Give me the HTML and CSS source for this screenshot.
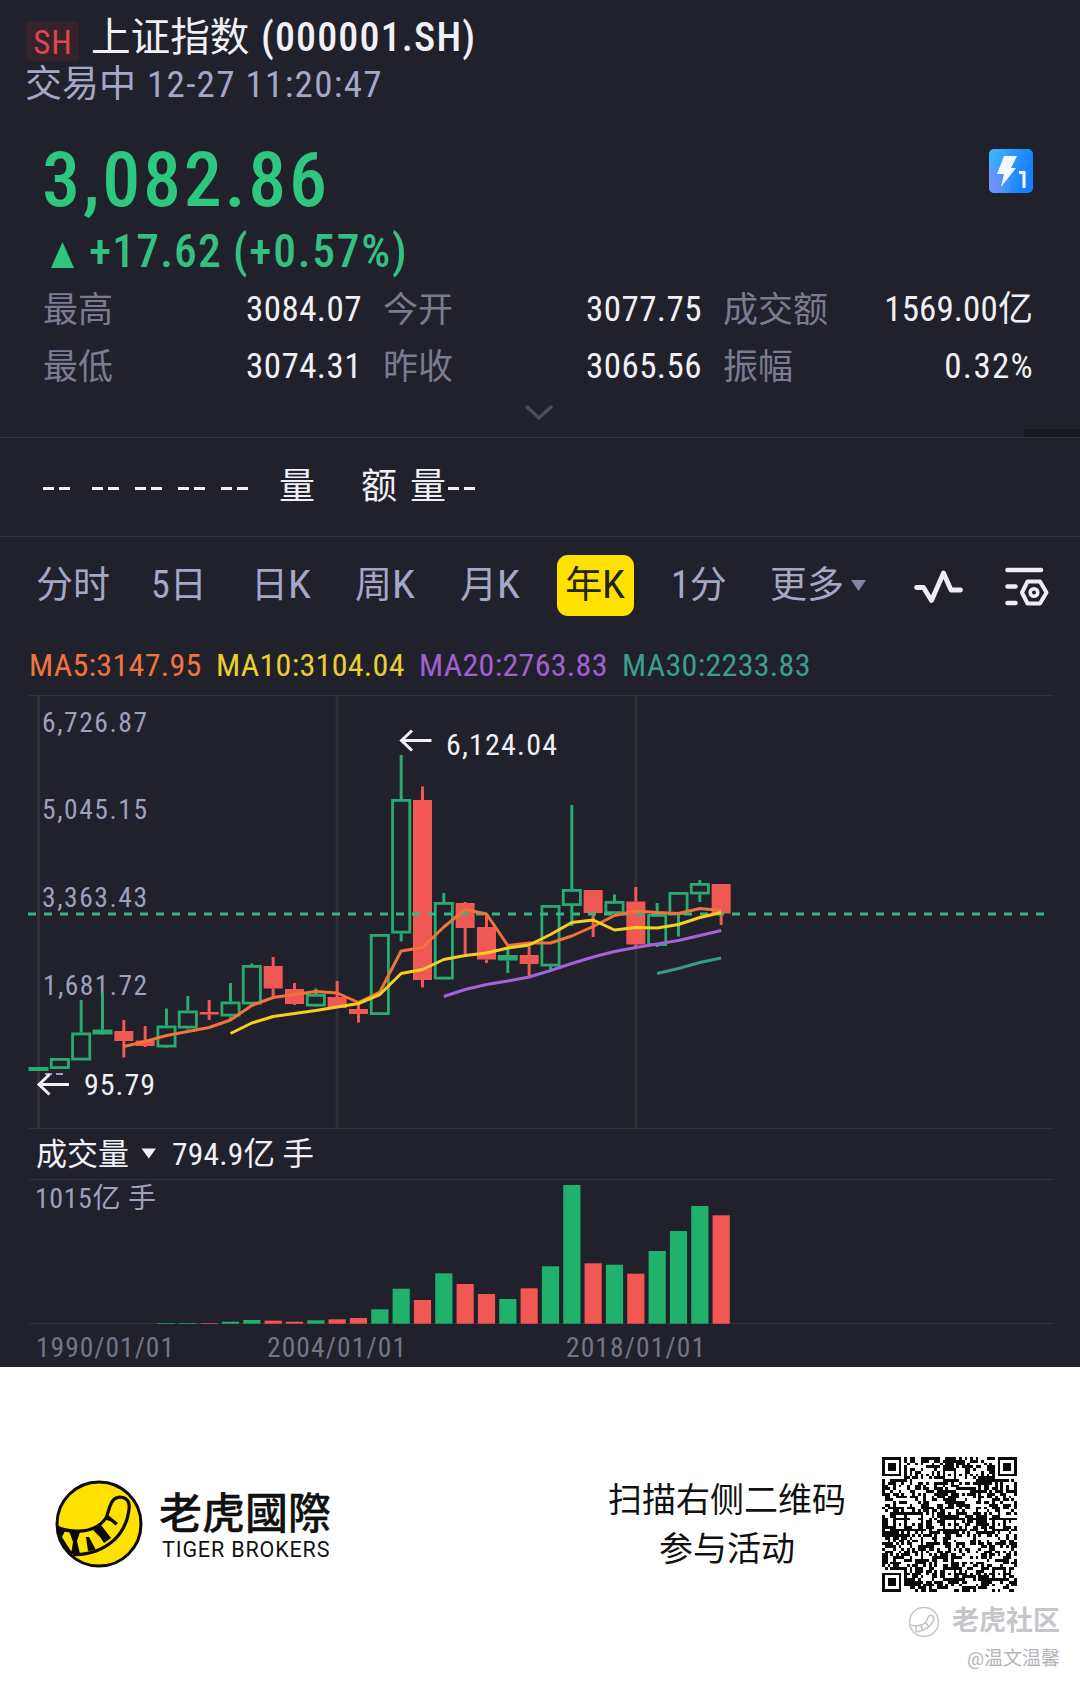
FILE: index.html
```html
<!DOCTYPE html>
<html lang="zh-CN">
<head>
<meta charset="utf-8">
<title>上证指数 (000001.SH)</title>
<link rel="stylesheet" href="styles.css">
</head>
<body>
<main class="panel">
  <header class="head">
    <div class="title-row"><span class="badge">SH</span><h1>上证指数</h1><span class="code">(000001.SH)</span></div>
    <div class="status-row"><span>交易中</span><span class="time">12-27 11:20:47</span></div>
  </header>
  <section class="quote">
    <div class="price-row">
      <div class="price">3,082.86</div>
      <svg class="flash" viewBox="0 0 44 44">
        <defs>
          <linearGradient id="fg" x1="0" y1="0" x2="1" y2="0.35"><stop offset="0" stop-color="#46b4fb"/><stop offset="1" stop-color="#167fff"/></linearGradient>
          <radialGradient id="fp" cx="0" cy="0.85" r="0.6"><stop offset="0" stop-color="#7d8cff"/><stop offset="1" stop-color="#7d8cff" stop-opacity="0"/></radialGradient>
        </defs>
        <rect width="44" height="44" rx="5" fill="url(#fg)"/><rect width="44" height="44" rx="5" fill="url(#fp)"/>
        <path d="M15 7H28L22 19H27L12 38L15 25H8Z" fill="#f2faff"/>
        <path d="M30 23.5H35V39" fill="none" stroke="#fff" stroke-width="3"/>
      </svg>
    </div>
    <div class="change-row"><i class="up"></i><span class="delta">+17.62</span><span class="pct">(+0.57%)</span></div>
    <dl class="stats">
      <dt>最高</dt><dd>3084.07</dd><dt>今开</dt><dd>3077.75</dd><dt>成交额</dt><dd>1569.00<span class="cn">亿</span></dd>
      <dt>最低</dt><dd>3074.31</dd><dt>昨收</dt><dd>3065.56</dd><dt>振幅</dt><dd class="amp">0.32%</dd>
    </dl>
    <svg class="chevron" viewBox="0 0 28 16"><path d="M2 2L14 13L26 2" fill="none" stroke="#4c4d5b" stroke-width="3.4" stroke-linecap="round"/></svg>
    <i class="stub"></i>
  </section>
  <section class="ticks">
    <span class="dash"></span><span class="dash"></span><span class="dash"></span><span class="dash"></span><span class="dash"></span>
    <span class="vol">量</span><span class="amt">额</span><span class="vol2">量</span><span class="dash"></span>
  </section>
  <nav class="tabs">
    <span class="tab t1">分时</span><span class="tab t2"><b>5</b>日</span><span class="tab t3">日<b>K</b></span><span class="tab t4">周<b>K</b></span><span class="tab t5">月<b>K</b></span><span class="tab active">年<b>K</b></span><span class="tab t7"><b>1</b>分</span><span class="tab t8">更多<i class="down"></i></span>
    <svg class="wave" viewBox="0 0 50 34"><path d="M2.5 17.5H9.500L17.5 30.500L29.500 3L37 20H46.500" fill="none" stroke="#eeeef2" stroke-width="4.800" stroke-linecap="round" stroke-linejoin="round"/></svg>
    <svg class="gear" viewBox="0 0 44 40" fill="none" stroke="#eeeef2" stroke-width="4.600" stroke-linecap="round" stroke-linejoin="round"><path d="M2.5 3H36M2.5 19.5H10.500M2.500 36H10.500"/><path d="M22.500 14.500H35L41.500 25.500L35 36.500H22.500L17 25.500Z" stroke-width="4"/><circle cx="29" cy="25.500" r="3.800" stroke-width="3.600"/></svg>
  </nav>
  <div class="ma"><span class="m5">MA5:3147.95</span><span class="m10">MA10:3104.04</span><span class="m20">MA20:2763.83</span><span class="m30">MA30:2233.83</span></div>
  <svg class="chart" id="chart" viewBox="0 690 1080 677"></svg>
</main>
<footer class="foot">
  <svg class="logo" viewBox="0 0 88 88">
    <circle cx="44" cy="44" r="42" fill="#ffe100" stroke="#0b0b0b" stroke-width="3"/>
    <path d="M2 47Q10 51 20 51C36 52 47 45 51.500 37L55 26C58 17 64 16.500 68 17.500C76 20 75 28 72 39C68 52 59 64 41 71Q30 75 18 74.500" fill="none" stroke="#0b0b0b" stroke-width="3.200" stroke-linejoin="round"/>
    <path d="M2 46L10 51L7 57L12 65L18 74L11 71L3 57ZM14 51L25 52L22 61L25 74H16L18 62ZM31 57L34 57L41 70L33 71ZM38 50L46 45L56 58L49 63L45 57ZM49 39L53 35L63 43L60.500 45.500L56 41.500Z" fill="#0b0b0b"/>
  </svg>
  <div class="brand"><div class="brand-cn">老虎國際</div><div class="brand-en">TIGER BROKERS</div></div>
  <p class="scan">扫描右侧二维码<br>参与活动</p>
  <svg class="qr" id="qr" viewBox="0 0 49 49" shape-rendering="crispEdges"></svg>
  <div class="mark">
    <svg viewBox="0 0 32 32" fill="none" stroke="#c4c6c9" stroke-width="1.600"><circle cx="16" cy="16" r="14.500"/><path d="M2 19C10 21 17 19 19 14C20 10 22 8 25 10C28 15 21 24 8 26M8 20V26M13 20L15 25M18 17L21 21"/></svg>
    <span>老虎社区</span>
  </div>
  <div class="user">@温文温馨</div>
</footer>
<script src="chart.js"></script>
</body>
</html>
```
FILE: styles.css
```css
* { box-sizing: border-box; }
body { margin: 0; width: 1080px; background: #fff; font-family: Roboto, "Noto Sans CJK SC", sans-serif; font-stretch: 87%; }
.panel { height: 1367px; background: #21212b; color: #f0f0f5; display: flex; flex-direction: column; overflow: hidden; }
.head { height: 130px; padding: 13px 26px 0; white-space: nowrap; }
.title-row { display: flex; height: 50px; line-height: 50px; }
.badge { width: 53px; height: 40px; margin-top: 8px; padding-left: 1px; line-height: 43px; border-radius: 5px; background: #35232b; color: #dc4850; font-size: 33px; letter-spacing: 1px; text-align: center; }
h1 { margin: 0 0 0 12px; font-size: 39.6px; font-weight: 400; width: 170px; }
.code { font-size: 40px; font-weight: 500; letter-spacing: 1.15px; }
.status-row { display: flex; height: 44px; line-height: 44px; color: #a6a7c6; font-size: 37px; }
.status-row span:first-child { margin: 0 0 0 -1px; width: 122px; }
.time { letter-spacing: 1.3px; }
.quote { height: 308px; position: relative; padding: 0 47px 0 43px; border-bottom: 1px solid #32333e; display: flex; flex-direction: column; }
.price-row { display: flex; justify-content: space-between; height: 95px; }
.price { font-size: 76px; font-weight: 500; line-height: 100px; color: #2dc782; letter-spacing: 2.7px; margin-left: -1px; }
.flash { width: 44px; height: 44px; margin-top: 19px; }
.change-row { display: flex; height: 52px; line-height: 54px; color: #35c083; font-size: 45.5px; font-weight: 500; }
.up { width: 23px; height: 26px; margin: 17px 15px 0 8px; background: #2dc782; clip-path: polygon(50% 0, 100% 100%, 0 100%); }
.delta { width: 144px; letter-spacing: 1.2px; }
.pct { letter-spacing: 1.8px; }
.stats { margin: 3px -12px 0 0; display: grid; grid-template-columns: 100px 219px 121px 219px 138px 194px; grid-template-rows: 57px 57px; line-height: 59px; font-size: 35px; white-space: nowrap; }
dt { color: #7b7c90; margin-top: 1px; }
dd { margin: 0; text-align: right; letter-spacing: .45px; }
dd:nth-of-type(3n) { letter-spacing: .1px; padding-right: 1px; }
dd.amp { letter-spacing: 1.300px; padding: 0; }
dt:nth-of-type(3n+2), dt:nth-of-type(3n) { padding-left: 21px; }
.chevron { width: 28px; height: 16px; position: absolute; left: 525px; top: 275px; }
.stub { position: absolute; right: 0; top: 299px; width: 56px; height: 8px; background: #171720; }
.ticks { height: 99px; border-bottom: 1px solid #30313c; display: flex; align-items: center; padding-left: 43px; font-size: 36px; line-height: 97px; }
.dash { width: 27px; height: 3px; margin: 3px 16px 0 0; background: linear-gradient(90deg, #f0f0f5 0 11px, transparent 11px 16px, #f0f0f5 16px); }
.dash:first-child { margin-right: 22px; }
.vol { margin-left: 15px; width: 82px; }
.amt { width: 49px; }
.vol2 { width: 38px; }
.tabs { height: 113px; display: flex; padding: 18px 0 0 36px; font-size: 37px; line-height: 61px; color: #a6a7c6; white-space: nowrap; }
.tab { height: 61px; flex: none; }
.tab b { display: inline-block; font-weight: 400; font-size: 38px; line-height: 50px; transform-origin: 0 50%; }
.t3 b, .t4 b, .t5 b, .active b { transform: scaleX(1.1); }
.t1 { width: 115px; } .t2 { width: 100px; } .t3 { width: 104px; } .t4 { width: 105px; } .t5 { width: 97px; }
.active { width: 77px; background: #ffe100; color: #24230f; border-radius: 11px; text-align: center; padding-right: 3px; margin-right: 37px; }
.t7 { width: 99px; } .t8 { display: flex; width: 144px; }
.down { width: 15px; height: 11px; margin: 25px 0 0 7px; background: #8485a0; clip-path: polygon(0 0, 100% 0, 50% 100%); }
.wave { width: 50px; height: 34px; margin-top: 15px; flex: none; }
.gear { width: 44px; height: 40px; margin: 12px 0 0 41px; flex: none; }
.ma { height: 40px; line-height: 30px; padding-left: 29px; display: flex; font-size: 32px; letter-spacing: .3px; white-space: nowrap; }
.m5 { width: 187px; color: #ee7440; } .m10 { width: 203px; color: #ead02e; } .m20 { width: 203px; color: #9f61d0; } .m30 { color: #3c9e8c; }
.chart { width: 1080px; height: 677px; flex: none; display: block; }
.chart text { font-family: Roboto, "Noto Sans CJK SC", sans-serif; }
.foot { height: 316px; background: #fff; color: #111; display: grid; grid-template-columns: 104px 401px 300px 135px; grid-template-rows: 239px 44px 33px; padding-left: 55px; }
.logo { width: 88px; height: 88px; margin-top: 113px; }
.brand-cn { font: 500 43px/50px "Noto Sans CJK TC", sans-serif; -webkit-text-stroke: .3px #111; margin-top: 118px; }
.brand-en { font-size: 21.500px; line-height: 26px; margin: 2px 0 0 3px; font-stretch: 100%; letter-spacing: .85px; }
.scan { margin: 109px 0 0; width: 334px; text-align: center; font-size: 34px; line-height: 49px; }
.qr { width: 135px; height: 135px; margin: 90px 0 0 22px; }
.mark { grid-column: 1 / -1; display: flex; justify-content: flex-end; margin-right: -65px; height: 32px; line-height: 30px; gap: 12px; color: #c4c6c9; font-size: 27px; font-weight: 700; }
.mark svg { width: 32px; height: 32px; }
.user { grid-column: 1 / -1; text-align: right; margin-right: -65px; color: #b4b6ba; font-size: 19px; line-height: 18px; font-stretch: 100%; }
```
FILE: chart.js
```js
const UP = '#29ab70', DOWN = '#f15854', X0 = 38.5, STEP = 21.333;
const cx = i => X0 + i * STEP;
const out = [];
const rect = (x, y, w, h, fill) => out.push(`<rect x="${x}" y="${y}" width="${w}" height="${h}" fill="${fill}"/>`);
const text = (x, y, w, size, fill, s) => out.push(`<text x="${x}" y="${y}" font-size="${size}" fill="${fill}" textLength="${w}" lengthAdjust="spacing">${s}</text>`);

// frame and year grid
[695, 1128, 1179, 1323].forEach(y => rect(28, y, 1025, 1, '#30313c'));
[0, 14, 28].forEach(i => rect(cx(i) - 1.5, 696, 3, 432, '#2f2f36'));

text(42, 732, 105, 27.5, '#a0a0bd', '6,726.87');
text(42, 819, 105, 27.5, '#a0a0bd', '5,045.15');
text(42, 907, 105, 27.5, '#a0a0bd', '3,363.43');
text(43, 995, 104, 27.5, '#a0a0bd', '1,681.72');
rect(45, 1073, 7, 2, '#a0a0bd');
rect(56, 1073, 7, 2, '#a0a0bd');

// kind (h hollow, f filled up, r down), body top, body bottom, high, low
const candles = [
  ['f',1067,1071,1067,1071],['h',1058,1069,1058,1069],['h',1032.5,1060.5,1000,1060],['f',1029.5,1034.5,992.5,1035],
  ['r',1031,1041,1020,1057.5],['r',1040.5,1046,1026,1047],['h',1025.5,1047.5,1008.5,1048],['h',1010.5,1028.5,996,1029.5],
  ['r',1012,1014.5,1000,1020],['h',1001.5,1016.5,983,1019],['h',965,1004.5,963.5,1005],['r',966,988.5,957,996],
  ['r',989,1004,983,1005],['h',994,1006.5,988.5,1007],['r',997,1008,981,1008],['r',1009,1014,1002,1022.5],
  ['h',934,1015,934,1015],['h',799,933.5,755,941.5],['r',800,980,786.5,987.5],['h',902,979.5,893,979],
  ['r',903,928,902,954],['r',927,959.5,914,963],['f',955,960.5,948.5,973],['r',955,964,946.5,976],
  ['h',905,966.5,905,969],['h',889,906,805,926],['r',890,913,890,937],['h',901,914,894.5,914],
  ['r',901.5,944.5,887,948],['h',914,946,903,947],['h',892,915,892,936.5],['h',883,894.5,880,902],['r',884,913.5,884,925]
];
candles.forEach(([k, t, b, hi, lo], i) => {
  const c = k === 'r' ? DOWN : UP, x = cx(i);
  if (hi < t) rect(x - 1.5, hi, 3, t - hi, c);
  if (lo > b) rect(x - 1.5, b, 3, lo - b, c);
  if (k === 'h') out.push(`<rect x="${x - 8.6}" y="${t + 1.4}" width="17.2" height="${b - t - 2.8}" fill="none" stroke="${c}" stroke-width="2.8"/>`);
  else rect(x - (k === 'f' ? 10 : 9.5), t, k === 'f' ? 20 : 19, b - t, c);
});
out.push(`<path d="M28 914H1045" stroke="#35b880" stroke-width="2.800" stroke-dasharray="8 8"/>`);

const line = (start, ys, c) => out.push(`<polyline points="${ys.map((y, i) => cx(start + i) + ',' + y).join(' ')}" fill="none" stroke="${c}" stroke-width="3" stroke-linejoin="round"/>`);
line(4, [1046.5,1041.5,1035.5,1031.5,1027.5,1020,1005.5,997.5,994.5,991.5,993,1002.5,992,951,947.5,927,909.5,914,945.5,943,943,936,926.5,915.5,911,912.5,913.5,908.5,910.5], '#f0733a');
line(9, [1033.5,1023,1016.5,1013.5,1010.5,1007,1003.5,994.5,973.5,969.5,959.5,955.5,953,948,945,934.5,922.5,920,930,927.5,928,924.5,917.5,912.5], '#f6cf20');
line(19, [996.5,989.5,984.5,981,977,970.5,963.5,957,951.5,947.5,944,940.5,935.5,930.5], '#a364d8');
line(29, [973.5,968.5,962.5,958], '#379b8b');

const arrow = (x, y) => out.push(`<path d="M${x + 30} ${y}H${x}M${x + 10.5} ${y - 10}L${x} ${y}L${x + 10.5} ${y + 10}" fill="none" stroke="#f0f0f5" stroke-width="3"/>`);
arrow(401.5, 740.5);
arrow(39, 1084.5);
text(446, 754.5, 111, 30, '#f0f0f5', '6,124.04');
text(84, 1095, 71, 30, '#f0f0f5', '95.79');

// volume
text(36, 1164.500, 93, 31, '#f0f0f5', '成交量');
out.push('<path d="M141.500 1148.500H156L148.800 1158.500Z" fill="#f0f0f5"/>');
text(172, 1164.500, 142, 31.5, '#f0f0f5', '794.9亿 手');
text(35, 1207.500, 121, 28, '#a0a0bd', '1015亿 手');
const vol = 'g1323 g1323 r1323 g1321.7 g1320 r1320.700 r1321.700 g1320.300 r1319.300 r1318 g1309.300 g1288.700 r1300 g1273.300 r1284 r1294 g1299 r1288.300 g1266.300 g1185 r1263.300 g1264.700 r1273.700 g1251 g1231 g1206 r1215.300'.split(' ');
vol.forEach((v, i) => {
  const y = +v.slice(1);
  rect(cx(i + 6) - 8.6, y, 17.2, 1323.7 - y, v[0] === 'g' ? '#20b16d' : DOWN);
});
text(36, 1357, 138, 27.5, '#747586', '1990/01/01');
text(267, 1357, 139, 27.5, '#747586', '2004/01/01');
text(566, 1357, 139, 27.5, '#747586', '2018/01/01');
document.getElementById('chart').innerHTML = out.join('');

// 49-module code: finders, alignment marks, timing tracks and data modules
const N = 49, finder = (x, y) => {
  const d = Math.max(Math.abs(x - 3), Math.abs(y - 3));
  return d === 4 ? 0 : d === 3 || d < 2 ? 1 : 0;
};
let seed = 20221227, d = '';
const rnd = () => (seed = (seed * 1103515245 + 12345) % 2147483648) / 2147483648;
for (let y = 0; y < N; y++) for (let x = 0; x < N; x++) {
  let v = rnd() < 0.52 ? 1 : 0;
  if (x === 6 || y === 6) v = (x + y) % 2 ? 0 : 1;
  for (const a of [6, 24, 42]) for (const b of [6, 24, 42]) {
    const m = Math.max(Math.abs(x - a), Math.abs(y - b));
    if (m < 3) v = m === 1 ? 0 : 1;
  }
  if (x < 8 && y < 8) v = finder(x, y);
  if (x > 40 && y < 8) v = finder(x - 42, y);
  if (x < 8 && y > 40) v = finder(x, y - 42);
  if (v) d += `M${x} ${y}h1v1h-1z`;
}
document.getElementById('qr').innerHTML = `<path d="${d}" fill="#0b0b0b"/>`;
```
